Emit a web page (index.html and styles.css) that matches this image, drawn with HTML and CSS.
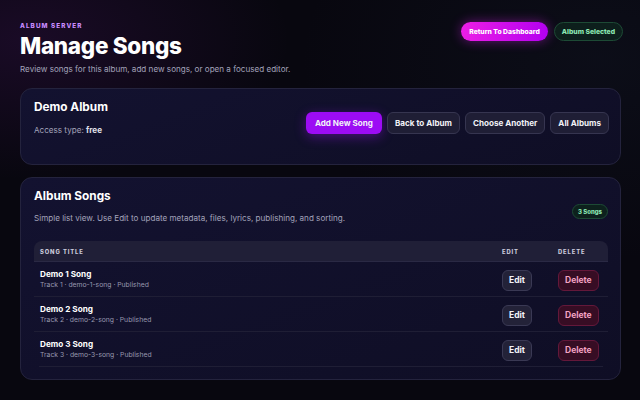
FILE: index.html
```html
<!DOCTYPE html>
<html lang="en">
<head>
    <meta charset="UTF-8">
    <meta name="viewport" content="width=device-width, initial-scale=1.0">
    <title>Manage Songs</title>
    <link rel="stylesheet" href="styles.css">
</head>
<body>
    <div class="page">
        <header class="page-header">
            <div class="page-heading">
                <div class="eyebrow">Album Server</div>
                <h1>Manage Songs</h1>
                <p class="lead">Review songs for this album, add new songs, or open a focused editor.</p>
            </div>
            <div class="header-actions">
                <button class="pill pill-gradient">Return To Dashboard</button>
                <span class="pill pill-green">Album Selected</span>
            </div>
        </header>

        <section class="card album-card">
            <div class="album-info">
                <h2>Demo Album</h2>
                <p class="muted">Access type: <strong>free</strong></p>
            </div>
            <div class="album-actions">
                <button class="btn btn-primary">Add New Song</button>
                <button class="btn">Back to Album</button>
                <button class="btn">Choose Another</button>
                <button class="btn">All Albums</button>
            </div>
        </section>

        <section class="card songs-card">
            <div class="songs-head">
                <div>
                    <h2>Album Songs</h2>
                    <p class="muted">Simple list view. Use Edit to update metadata, files, lyrics, publishing, and sorting.</p>
                </div>
                <span class="count-badge">3 Songs</span>
            </div>

            <div class="song-table">
                <div class="song-row table-head">
                    <div>Song Title</div>
                    <div>Edit</div>
                    <div>Delete</div>
                </div>
                <div class="song-row">
                    <div>
                        <div class="song-title">Demo 1 Song</div>
                        <div class="song-meta">Track 1 · demo-1-song · Published</div>
                    </div>
                    <div><button class="btn btn-small">Edit</button></div>
                    <div><button class="btn btn-small btn-danger">Delete</button></div>
                </div>
                <div class="song-row">
                    <div>
                        <div class="song-title">Demo 2 Song</div>
                        <div class="song-meta">Track 2 · demo-2-song · Published</div>
                    </div>
                    <div><button class="btn btn-small">Edit</button></div>
                    <div><button class="btn btn-small btn-danger">Delete</button></div>
                </div>
                <div class="song-row last">
                    <div>
                        <div class="song-title">Demo 3 Song</div>
                        <div class="song-meta">Track 3 · demo-3-song · Published</div>
                    </div>
                    <div><button class="btn btn-small">Edit</button></div>
                    <div><button class="btn btn-small btn-danger">Delete</button></div>
                </div>
            </div>
        </section>
    </div>
</body>
</html>
```

FILE: styles.css
```css
* {
    margin: 0;
    padding: 0;
    box-sizing: border-box;
}

body {
    font-family: Inter, "Noto Sans", sans-serif;
    background-color: #08070f;
    background-image: radial-gradient(ellipse 260px 140px at 30px 40px, rgba(120, 30, 160, 0.16), transparent),
        radial-gradient(ellipse 300px 200px at 600px 60px, rgba(40, 60, 90, 0.12), transparent);
    color: #f4f4fa;
    width: 640px;
    height: 400px;
    overflow: hidden;
}

.page {
    padding: 21px 19px 20px 20px;
}

button {
    font-family: inherit;
    cursor: pointer;
}

/* header */
.page-header {
    display: flex;
    justify-content: space-between;
    align-items: flex-start;
}

.eyebrow {
    font-size: 6.3px;
    line-height: 10px;
    font-weight: 800;
    letter-spacing: 1.1px;
    text-transform: uppercase;
    color: #c98cff;
}

h1 {
    font-size: 22.5px;
    line-height: 26px;
    font-weight: 800;
    letter-spacing: -0.3px;
    color: #ffffff;
    margin-top: 2px;
}

.lead {
    font-size: 8.1px;
    line-height: 12px;
    color: #a3a3ba;
    margin-top: 4px;
}

.header-actions {
    display: flex;
    gap: 6px;
    margin-top: 1px;
    margin-right: -2px;
}

.pill {
    display: inline-flex;
    align-items: center;
    height: 19px;
    padding: 0 7px;
    border-radius: 10px;
    font-size: 6.8px;
    font-weight: 800;
    white-space: nowrap;
}

.pill-gradient {
    border: none;
    color: #fff;
    background: linear-gradient(90deg, #ec1ee6, #b300f0);
    box-shadow: 0 0 12px rgba(215, 30, 240, 0.45);
    padding: 0 8px;
}

.pill-green {
    color: #8de8b4;
    background: #0d1f1c;
    border: 1px solid #1d4a35;
}

/* cards */
.card {
    background: linear-gradient(160deg, #131230, #0f0e25);
    border: 1px solid #24233d;
    border-radius: 12px;
    padding: 11px 11px 12px 13px;
}

h2 {
    font-size: 11.8px;
    line-height: 15px;
    font-weight: 700;
    color: #ffffff;
}

.muted {
    font-size: 8.1px;
    line-height: 12px;
    color: #a3a3ba;
}

.muted strong {
    color: #e0e0ea;
    font-weight: 700;
}

.album-card {
    margin-top: 13px;
    height: 77px;
    display: flex;
    justify-content: space-between;
    align-items: flex-start;
}

.album-info .muted {
    margin-top: 9px;
}

.album-actions {
    display: flex;
    gap: 5px;
    margin-top: 12px;
}

.btn {
    height: 22px;
    padding: 0 7px;
    border-radius: 6px;
    border: 1px solid #363550;
    background: #1f1e35;
    color: #f2f2f8;
    font-size: 8.1px;
    font-weight: 700;
    white-space: nowrap;
}

.btn-primary {
    border: none;
    padding: 0 9px;
    background: #9c0cf4;
    box-shadow: 0 3px 12px rgba(150, 20, 240, 0.4);
}

.songs-card {
    margin-top: 12px;
    padding-right: 12px;
}

.songs-head {
    display: flex;
    justify-content: space-between;
    align-items: center;
}

.songs-head .muted {
    margin-top: 8px;
}

.count-badge {
    font-size: 6px;
    font-weight: 800;
    color: #8de8b4;
    background: #0d211d;
    border: 1px solid #1d4a35;
    border-radius: 8px;
    padding: 3px 5px;
    margin-top: 9px;
}

/* table */
.song-table {
    margin-top: 17px;
}

.song-row {
    display: grid;
    grid-template-columns: 1fr 56px 56px;
    align-items: center;
    height: 35px;
    border-bottom: 1px solid #1f1e35;
}

.song-row > div {
    padding-left: 6px;
}

.song-row.last {
    margin-left: 5px;
    margin-right: 5px;
    grid-template-columns: 1fr 56px 51px;
}

.song-row.last > div:first-child {
    padding-left: 1px;
}

.table-head {
    height: 21px;
    background: #201f37;
    border-radius: 8px 8px 0 0;
    border-bottom: 1px solid #2a2944;
    font-size: 5.8px;
    font-weight: 800;
    letter-spacing: 0.9px;
    text-transform: uppercase;
    color: #c9c9da;
}

.song-title {
    font-size: 8.2px;
    line-height: 11px;
    font-weight: 700;
    color: #ffffff;
}

.song-meta {
    font-size: 6.8px;
    line-height: 10px;
    color: #9797ae;
}

.btn-small {
    height: 21px;
    padding: 0 6px;
    font-size: 8.5px;
    border-color: #3a3954;
    background: #232238;
}

.btn-danger {
    color: #f3a3c3;
    background: #370d24;
    border-color: #64183a;
}
```
